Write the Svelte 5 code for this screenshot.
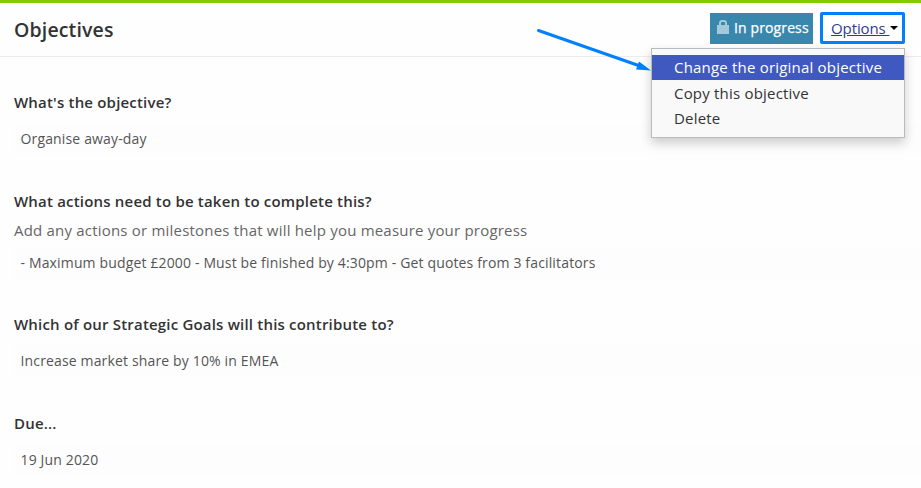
<script lang="ts">
  type Field = {
    label: string;
    hint?: string;
    value: string;
  };

  let fields: Field[] = [
    { label: "What's the objective?", value: "Organise away-day" },
    {
      label: "What actions need to be taken to complete this?",
      hint: "Add any actions or milestones that will help you measure your progress",
      value: "- Maximum budget £2000 - Must be finished by 4:30pm - Get quotes from 3 facilitators",
    },
    {
      label: "Which of our Strategic Goals will this contribute to?",
      value: "Increase market share by 10% in EMEA",
    },
    { label: "Due...", value: "19 Jun 2020" },
  ];

  let options = ["Change the original objective", "Copy this objective", "Delete"];
  let selected = 0;
  let open = true;
</script>

<main>
  <header>
    <h1>Objectives</h1>

    <div class="actions">
      <span class="status">
        <svg width="12" height="14" viewBox="0 0 12 14">
          <path d="M3 6V3.4Q3 1 5 1H7Q9 1 9 3.4V6" fill="none" stroke="#a3c9da" stroke-width="2" />
          <rect x="0" y="5" width="12" height="9" fill="#a3c9da" />
        </svg>
        <span class="status-text">In progress</span>
      </span>

      <div class="dropdown">
        <button type="button" class="toggle" on:click={() => (open = !open)}>
          <span class="toggle-text">Options&nbsp;</span>
          <span class="caret"></span>
        </button>

        {#if open}
          <ul class="menu">
            {#each options as option, i}
              <li class:selected={i === selected}>{option}</li>
            {/each}
          </ul>
        {/if}
      </div>
    </div>
  </header>

  <div class="fields">
    {#each fields as field}
      <section>
        <h2>{field.label}</h2>
        {#if field.hint}
          <p class="hint">{field.hint}</p>
        {/if}
        <div class="value">{field.value}</div>
      </section>
    {/each}
  </div>

  <!-- Arrow pointing at the first menu entry -->
  <svg class="pointer" width="121" height="52" viewBox="0 0 121 52">
    <path d="M8.5 10.5L110 46" stroke="#0080ff" stroke-width="3" stroke-linecap="round" />
    <path d="M121 50.5L106 49.5L109 41.5Z" fill="#0080ff" />
  </svg>
</main>

<style>
  :global(body) {
    background: #fefefe;
  }

  main {
    position: relative;
    height: 488px;
    box-sizing: border-box;
    border-top: 3px solid #7fcc00;
    font-family: "Open Sans", sans-serif;
    color: #333;
    overflow: hidden;
  }

  header {
    display: flex;
    justify-content: space-between;
    align-items: flex-start;
    height: 53px;
    padding: 0 16px 0 14px;
    border-bottom: 1px solid #ececec;
  }

  h1 {
    margin: 13px 0 0;
    font-size: 19.5px;
    line-height: 28px;
    font-weight: 600;
    letter-spacing: 0.15px;
  }

  .actions {
    display: flex;
    gap: 7px;
    padding-top: 9px;
  }

  .status {
    display: flex;
    width: 103px;
    height: 31px;
    margin-top: 1px;
    padding-left: 7px;
    box-sizing: border-box;
    background: #3a87ad;
    color: #fff;
  }

  .status svg {
    flex: none;
    margin-top: 7px;
  }

  .status-text {
    margin-left: 5px;
    font-size: 14px;
    line-height: 30px;
    font-weight: 500;
    letter-spacing: 0.12px;
    -webkit-text-stroke: 0.25px #fff;
    white-space: nowrap;
  }

  .dropdown {
    position: relative;
  }

  .toggle {
    display: flex;
    align-items: center;
    width: 85px;
    height: 32px;
    padding: 0 0 0 8px;
    box-sizing: border-box;
    border: 3px solid #0080ff;
    border-radius: 2px;
    background: #fff;
    color: #2e3c96;
    font-family: inherit;
    font-size: 15px;
    cursor: pointer;
  }

  .toggle-text {
    letter-spacing: -0.1px;
    text-decoration: underline;
  }

  .caret {
    margin: -1px 0 0 1px;
    border: 4px solid transparent;
    border-top-color: #000;
    border-bottom: 0;
  }

  .menu {
    position: absolute;
    top: 36px;
    right: 0;
    z-index: 1;
    width: 254px;
    height: 90px;
    margin: 0;
    padding: 6px 0 0;
    box-sizing: border-box;
    border: 1px solid #bbb;
    background: #f9f9f9;
    box-shadow: 0 5px 10px rgba(0, 0, 0, 0.2);
    list-style: none;
  }

  .menu li {
    height: 25px;
    padding-left: 22px;
    font-size: 15px;
    line-height: 25px;
    letter-spacing: 0.2px;
    white-space: nowrap;
  }

  .menu .selected {
    margin-bottom: 1px;
    background: #4059c0;
    color: #fff;
  }

  .fields {
    display: flex;
    flex-direction: column;
    gap: 34px;
    padding: 33px 0 0 14px;
  }

  h2 {
    margin: 0;
    font-size: 15px;
    line-height: 24px;
    font-weight: 600;
    letter-spacing: 0.19px;
  }

  .hint {
    margin: 5px 0 -4px;
    font-size: 15px;
    line-height: 24px;
    letter-spacing: 0.2px;
    color: #666;
  }

  .value {
    margin-top: 9px;
    padding-left: 6.5px;
    font-size: 14px;
    line-height: 32px;
    letter-spacing: 0.15px;
    background: #fdfdfd;
    color: #555;
  }

  .hint + .value {
    margin-bottom: -1px;
  }

  .pointer {
    position: absolute;
    top: 17px;
    left: 530px;
    z-index: 2;
  }
</style>
